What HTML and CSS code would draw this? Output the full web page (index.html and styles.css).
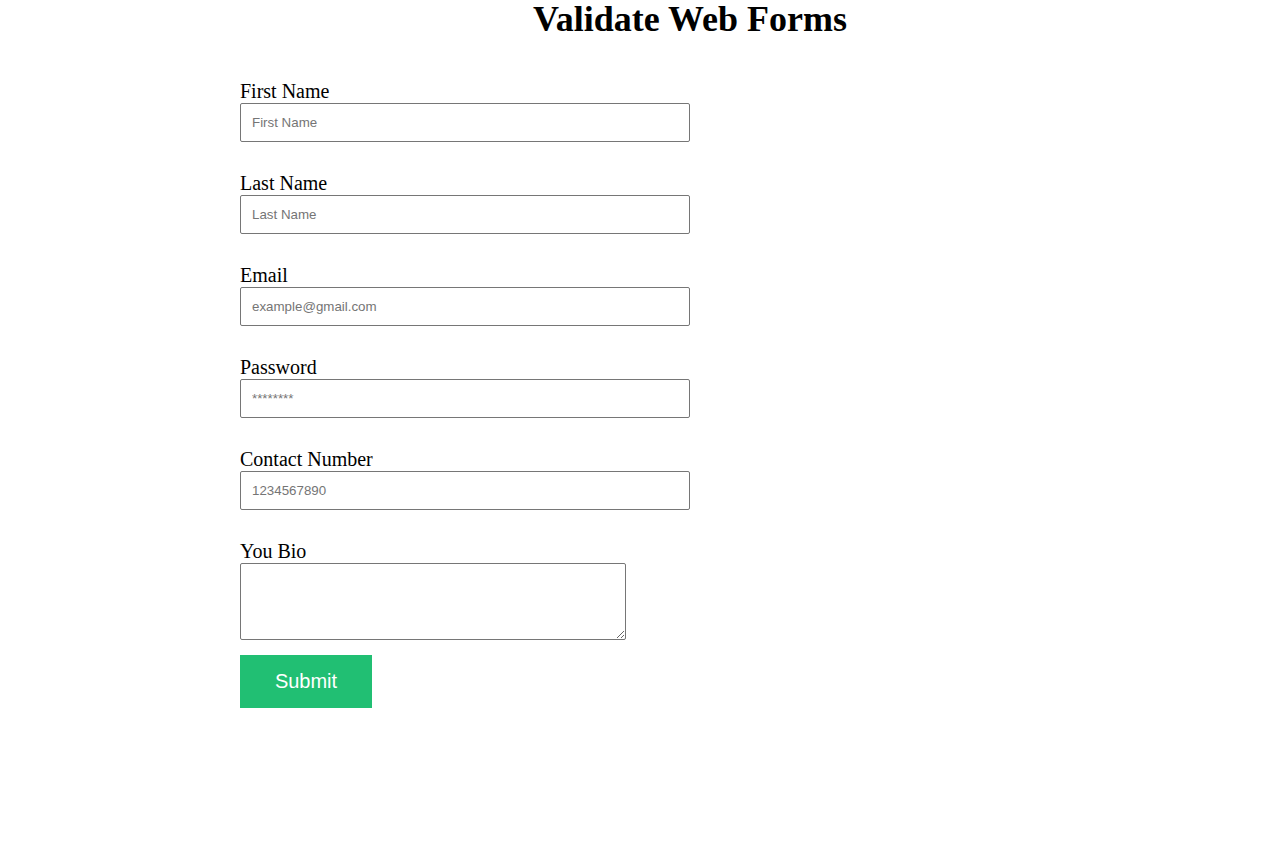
FILE: index.html
```html
<!DOCTYPE html>
<html>
<head>
<meta charset="utf-8">
<title>Validate Web Forms</title>
<link rel="stylesheet" href="styles.css">
</head>
<body>
<div class="container">
  <h1 class="title">Validate Web Forms</h1>
  <form class="form">
    <div class="field">
      <label class="label">First Name</label>
      <input class="input" type="text" placeholder="First Name">
    </div>
    <div class="field">
      <label class="label">Last Name</label>
      <input class="input" type="text" placeholder="Last Name">
    </div>
    <div class="field">
      <label class="label">Email</label>
      <input class="input" type="text" placeholder="example@gmail.com">
    </div>
    <div class="field">
      <label class="label">Password</label>
      <input class="input" type="text" placeholder="********">
    </div>
    <div class="field">
      <label class="label">Contact Number</label>
      <input class="input" type="text" placeholder="1234567890">
    </div>
    <div class="field field-bio">
      <label class="label">You Bio</label>
      <textarea class="textarea"></textarea>
    </div>
    <button class="submit" type="button">Submit</button>
  </form>
</div>
</body>
</html>
```
FILE: styles.css
```css
html, body {
  margin: 0;
  padding: 0;
  background: #ffffff;
}
body {
  font-family: "Liberation Serif", "Times New Roman", serif;
  color: #000;
}
.container {
  margin-left: 240px;
  width: 900px;
}
.title {
  margin: 0;
  text-align: center;
  font-size: 36px;
  font-weight: bold;
  line-height: 39px;
}
.form {
  margin-top: 41px;
  display: flex;
  flex-direction: column;
  align-items: flex-start;
}
.field {
  display: flex;
  flex-direction: column;
  margin-bottom: 30px;
}
.field-bio {
  margin-bottom: 15px;
}
.label {
  font-size: 20px;
  line-height: 23px;
}
.input {
  box-sizing: border-box;
  width: 450px;
  height: 39px;
  padding: 0 11px;
  border: 1px solid #767676;
  border-radius: 2px;
  font-family: "Liberation Sans", Arial, sans-serif;
  font-size: 13.33px;
  outline: none;
}
.input::placeholder {
  color: #757575;
}
.textarea {
  box-sizing: border-box;
  width: 386px;
  height: 77px;
  border: 1px solid #767676;
  border-radius: 2px;
  margin: 0;
  font-family: "Liberation Mono", monospace;
  font-size: 13.33px;
}
.submit {
  width: 132px;
  height: 53px;
  border: none;
  background: #21bf73;
  color: #ffffff;
  font-family: "Liberation Sans", Arial, sans-serif;
  font-size: 20px;
  padding: 0;
  cursor: pointer;
}
```
